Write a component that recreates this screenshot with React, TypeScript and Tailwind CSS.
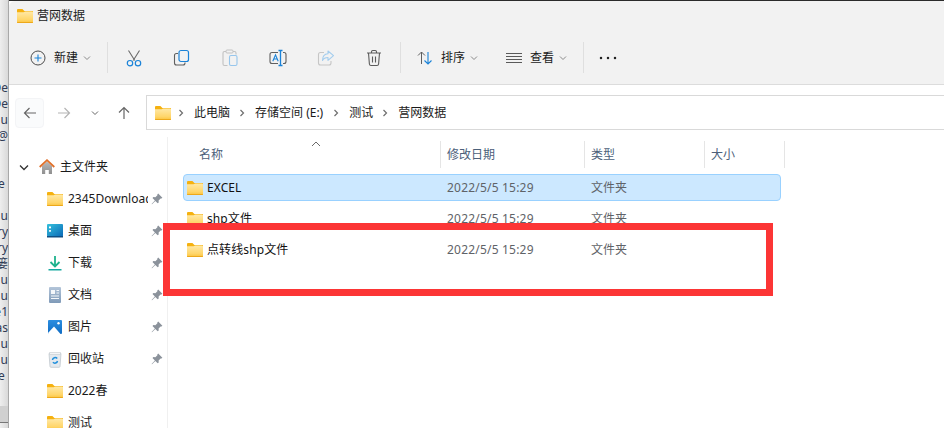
import React from "react";

const Folder = ({ id }: { id: string }) => (
  <svg width="16" height="14" viewBox="0 0 16 14" className="shrink-0">
    <defs>
      <linearGradient id={id} x1="0" y1="0" x2="0" y2="1">
        <stop offset="0" stopColor="#ffe9a8" />
        <stop offset="0.7" stopColor="#ffd66b" />
        <stop offset="1" stopColor="#fbc33c" />
      </linearGradient>
    </defs>
    <path d="M0 1.2C0 .5.5 0 1.2 0h4.2l2 2H16v3H0z" fill="#f5b110" />
    <path d="M0 3.2h6.6L8.2 2.4H15c.6 0 1 .4 1 1V13c0 .6-.4 1-1 1H1c-.6 0-1-.4-1-1z" fill={`url(#${id})`} />
    <path d="M0 13h16c0 .6-.4 1-1 1H1c-.6 0-1-.4-1-1z" fill="#eda81a" />
  </svg>
);

const Chevron = ({ className = "", color = "#8a8a8a" }: { className?: string; color?: string }) => (
  <svg width="8" height="6" viewBox="0 0 8 6" className={className}>
    <path d="M1 1.5l3 3 3-3" fill="none" stroke={color} strokeWidth="1" />
  </svg>
);

const Crumb = () => (
  <svg width="6" height="8" viewBox="0 0 6 8" className="shrink-0">
    <path d="M1.5 1l3 3-3 3" fill="none" stroke="#6e6e6e" strokeWidth="1.2" />
  </svg>
);

const Pin = () => (
  <svg width="12" height="12" viewBox="0 0 12 12" className="shrink-0">
    <path d="M7.2.6l4.2 4.2-1 .8-.8-.2-2 2 .1 2-1 .9-2.4-2.4L1 11.2l-.4-.3 3.3-3.4L1.500 5.100l.9-1 2 .1 2-2-.1-.8z" fill="#8b929b" />
  </svg>
);

const ToolBtn = ({ children }: { children: React.ReactNode }) => (
  <div className="w-12 h-5 flex items-center justify-center">{children}</div>
);

const Cut = () => (
  <svg width="20" height="20" viewBox="0 0 20 20">
    <path d="M4.500 2.500l6.300 10M15.500 2.500l-6.300 10" stroke="#6b6b6b" strokeWidth="1.1" fill="none" />
    <circle cx="6" cy="15.200" r="2.700" fill="none" stroke="#1b83d8" strokeWidth="1.200" />
    <circle cx="14" cy="15.200" r="2.700" fill="none" stroke="#1b83d8" strokeWidth="1.200" />
  </svg>
);
const Copy = () => (
  <svg width="20" height="20" viewBox="0 0 20 20">
    <path d="M6 5.500H4.500a2 2 0 0 0-2 2V15a2 2 0 0 0 2 2H11a2 2 0 0 0 2-2v-.5" fill="none" stroke="#5f5f5f" strokeWidth="1.100" />
    <rect x="7" y="2.500" width="9.500" height="11" rx="2" fill="none" stroke="#1b83d8" strokeWidth="1.200" />
  </svg>
);
const Paste = () => (
  <svg width="20" height="20" viewBox="0 0 20 20">
    <path d="M6 3.500H4.500a1.500 1.500 0 0 0-1.500 1.500v11a1.500 1.500 0 0 0 1.500 1.500h3M13 3.500h1.500A1.500 1.500 0 0 1 16 5v1.500" fill="none" stroke="#c2c2c2" strokeWidth="1.100" />
    <rect x="6" y="2" width="7" height="3" rx="1" fill="none" stroke="#c2c2c2" strokeWidth="1" />
    <rect x="9.500" y="7.500" width="7.500" height="10" rx="1.500" fill="none" stroke="#97c6ec" strokeWidth="1.100" />
  </svg>
);
const Rename = () => (
  <svg width="20" height="20" viewBox="0 0 20 20">
    <path d="M10 4.500H4a2 2 0 0 0-2 2v7a2 2 0 0 0 2 2h6M15 4.500h1a2 2 0 0 1 2 2v7a2 2 0 0 1-2 2h-1" fill="none" stroke="#5f5f5f" strokeWidth="1.100" />
    <path d="M4.800 13.200L7.500 6.800l2.700 6.400M5.800 11h3.400" fill="none" stroke="#1b83d8" strokeWidth="1.100" />
    <path d="M10.500 2.500h4M10.500 17.500h4M12.500 2.500v15" fill="none" stroke="#1b83d8" strokeWidth="1.300" />
  </svg>
);
const Share = () => (
  <svg width="20" height="20" viewBox="0 0 20 20">
    <path d="M8 4.500H4.500a2 2 0 0 0-2 2V15a2 2 0 0 0 2 2H13a2 2 0 0 0 2-2v-2" fill="none" stroke="#c6c6c6" strokeWidth="1.100" />
    <path d="M12 3l5.500 4.700L12 12.300V9.500c-2.500 0-4.500 1-5.500 3 0-4 2-6.500 5.500-6.700z" fill="none" stroke="#a3cdee" strokeWidth="1.100" strokeLinejoin="round" />
  </svg>
);
const Trash = () => (
  <svg width="20" height="20" viewBox="0 0 20 20">
    <path d="M3 5h14M7.500 5V3.800c0-.8.6-1.300 1.300-1.300h2.400c.7 0 1.300.5 1.300 1.300V5M4.500 5l.9 11c.1.900.7 1.500 1.600 1.500h6c.9 0 1.500-.6 1.600-1.500l.9-11M8.500 8.500v6M11.500 8.500v6" fill="none" stroke="#5c5c5c" strokeWidth="1.100" />
  </svg>
);

const Doc = () => (
  <svg width="16" height="18" viewBox="0 0 16 18">
    <defs>
      <linearGradient id="docg" x1="0" y1="0" x2="0" y2="1">
        <stop offset="0" stopColor="#b3c5d9" />
        <stop offset="1" stopColor="#7f9ab8" />
      </linearGradient>
    </defs>
    <rect x="2" y="1" width="12" height="16" rx="1" fill="url(#docg)" />
    <path d="M4 4h4v4H4zM9.500 4H12v1H9.500zM9.500 6.500H12v1H9.500zM4 9.500h8v1H4zM4 12h8v1H4z" fill="#f4f7fa" />
  </svg>
);
const Pic = () => (
  <svg width="16" height="16" viewBox="0 0 16 16">
    <defs>
      <linearGradient id="picg" x1="0" y1="0" x2="0" y2="1">
        <stop offset="0" stopColor="#2c8ee0" />
        <stop offset="1" stopColor="#0f6cc4" />
      </linearGradient>
    </defs>
    <rect x="1" y="1" width="14" height="14" rx="1" fill="url(#picg)" />
    <circle cx="11.500" cy="4.300" r="1.200" fill="#fff" />
    <path d="M1 14l6-6.500L13.500 15H2c-.5 0-1-.4-1-1z" fill="#fff" />
  </svg>
);
const Desktop = () => (
  <svg width="16" height="14" viewBox="0 0 16 14">
    <defs>
      <linearGradient id="deskg" x1="0" y1="0" x2="1" y2="1">
        <stop offset="0" stopColor="#35c1dc" />
        <stop offset="1" stopColor="#0a69b8" />
      </linearGradient>
    </defs>
    <rect x="0" y="0" width="16" height="12.500" rx="1" fill="url(#deskg)" />
    <rect x="0" y="12" width="16" height="1.500" fill="#0e4f84" />
    <rect x="2" y="2.500" width="2" height="1.800" fill="#fff" />
    <rect x="2" y="6" width="2" height="1.800" fill="#e5f4fb" />
  </svg>
);
const Download = () => (
  <svg width="16" height="16" viewBox="0 0 16 16">
    <path d="M8 1v10M3.500 7L8 11.500 12.500 7" fill="none" stroke="#1fb28d" strokeWidth="1.800" />
    <rect x="1.500" y="14" width="13" height="1.500" fill="#17a9a0" />
  </svg>
);
const Recycle = () => (
  <svg width="16" height="18" viewBox="0 0 16 18">
    <path d="M2 3.500h12l-1 13c0 .4-.4.800-.8.800H3.800c-.4 0-.8-.4-.8-.8z" fill="#e4e9ee" stroke="#bfc6cd" strokeWidth=".8" />
    <path d="M2.500 2.500h11v2h-11z" fill="#f3f5f7" stroke="#c4cacf" strokeWidth=".6" />
    <path d="M5.500 10a2.700 2.700 0 0 1 4.700-1.500M10.500 11a2.700 2.700 0 0 1-4.600 1.300" fill="none" stroke="#1f8fdc" strokeWidth="1.500" />
  </svg>
);
const Home = () => (
  <svg width="16" height="16" viewBox="0 0 16 16">
    <defs>
      <linearGradient id="homeg" x1="0" y1="0" x2="0" y2="1">
        <stop offset="0" stopColor="#b9b9b9" />
        <stop offset="1" stopColor="#8f8f8f" />
      </linearGradient>
    </defs>
    <path d="M3 7l5-4.500L13 7v8H9.800v-4H6.200v4H3z" fill="url(#homeg)" />
    <path d="M.7 8L8 1.200 15.300 8" fill="none" stroke="#e0702a" strokeWidth="1.800" />
  </svg>
);

const stripRows = ["De", "De", "u", "@", "", "", "e", "", "u", "ry", "ry", "篓", "u", "u", "e1", "as", "u", "u", "e"];

const navItems: { label: string; icon: React.ReactNode; pin: boolean }[] = [
  { label: "2345Downloads", icon: <Folder id="f-a" />, pin: true },
  { label: "桌面", icon: <Desktop />, pin: true },
  { label: "下载", icon: <Download />, pin: true },
  { label: "文档", icon: <Doc />, pin: true },
  { label: "图片", icon: <Pic />, pin: true },
  { label: "回收站", icon: <Recycle />, pin: true },
  { label: "2022春", icon: <Folder id="f-b" />, pin: false },
  { label: "测试", icon: <Folder id="f-c" />, pin: false },
];

const rows = [
  { name: "EXCEL", selected: true, id: "r-a" },
  { name: "shp文件", selected: false, id: "r-b" },
  { name: "点转线shp文件", selected: false, id: "r-c" },
];

export default function App() {
  return (
    <div className="relative flex w-[944px] h-[428px] overflow-hidden bg-white text-xs text-[#1a1a1a] font-['Noto_Sans','Noto_Sans_CJK_SC',sans-serif]">
      <div className="w-[9px] shrink-0 h-full flex flex-col bg-gradient-to-r from-[#eeeeee] to-[#d9d9d9] border-r border-[#a8a8a8] overflow-hidden">
        <div className="h-[406px] pt-20 shrink-0">
          {stripRows.map((t, i) => (
            <div
              key={i}
              className={
                t === "e"
                  ? "h-4 flex items-center justify-start -ml-[2px] whitespace-nowrap leading-4 text-[#2f3b55] text-xs"
                  : "h-4 flex items-center justify-end whitespace-nowrap leading-4 text-[#2f3b55] text-xs"
              }
            >
              {t}
            </div>
          ))}
        </div>
        <div className="h-[17px] bg-[#d0d0d0] border-b border-[#777777] shrink-0" />
      </div>

      <div className="flex-1 min-w-0 flex flex-col">
        <div className="h-px bg-[#2b2b2b] shrink-0" />
        <div className="h-[32px] shrink-0 bg-[#f2f2f2] rounded-tl-md flex items-center pl-2 pb-[2px] gap-1">
          <Folder id="f-title" />
          <span className="text-[#222222]">营网数据</span>
        </div>

        <div className="h-[52px] shrink-0 bg-[#f2f2f2] border-b border-[#dcdcdc] flex items-center pb-px text-[#1a1a1a]">
          <div className="w-[98px] flex items-center pl-[21px] shrink-0">
            <svg width="16" height="16" viewBox="0 0 16 16" className="shrink-0">
              <circle cx="8" cy="8" r="7" fill="none" stroke="#4d4d4d" strokeWidth="1" />
              <path d="M8 4.500v7M4.500 8h7" stroke="#1b83d8" strokeWidth="1.100" />
            </svg>
            <span className="ml-2">新建</span>
            <Chevron className="ml-[5px]" />
          </div>
          <div className="w-px h-[31px] self-start mt-[9px] bg-[#dfdfdf] shrink-0" />
          <div className="flex items-center pl-[2px] shrink-0">
            <ToolBtn><Cut /></ToolBtn>
            <ToolBtn><Copy /></ToolBtn>
            <ToolBtn><Paste /></ToolBtn>
            <ToolBtn><Rename /></ToolBtn>
            <ToolBtn><Share /></ToolBtn>
            <ToolBtn><Trash /></ToolBtn>
          </div>
          <div className="ml-[2px] w-px h-[31px] self-start mt-[9px] bg-[#dfdfdf] shrink-0" />
          <div className="flex items-center pl-4 shrink-0 w-[182px]">
            <svg width="16" height="14" viewBox="0 0 16 14" className="shrink-0">
              <path d="M4.500 13V1M1 4.500L4.500 1 8 4.500" fill="none" stroke="#5f5f5f" strokeWidth="1" />
              <path d="M11 1v12M7.500 9.500L11 13l3.500-3.500" fill="none" stroke="#1b83d8" strokeWidth="1.100" />
            </svg>
            <span className="ml-2">排序</span>
            <Chevron className="ml-[5px]" />
            <svg width="16" height="10" viewBox="0 0 16 10" className="ml-[28px] shrink-0">
              <path d="M0 .5h16M0 3.500h16M0 6.500h16M0 9.500h16" stroke="#5a5a5a" strokeWidth="1" />
            </svg>
            <span className="ml-2">查看</span>
            <Chevron className="ml-[5px]" />
          </div>
          <div className="w-px h-[31px] self-start mt-[9px] bg-[#dfdfdf] shrink-0" />
          <div className="pl-4 flex items-center gap-[5px] shrink-0">
            <span className="w-[2px] h-[2px] bg-[#222222] rounded-full scale-125" />
            <span className="w-[2px] h-[2px] bg-[#222222] rounded-full scale-125" />
            <span className="w-[2px] h-[2px] bg-[#222222] rounded-full scale-125" />
          </div>
        </div>

        <div className="h-[52px] shrink-0 flex items-start pt-[10px]">
          <div className="w-[137px] h-[35px] shrink-0 flex items-center pl-[6px]">
            <div className="w-[29px] h-[30px] rounded bg-[#fafbfc] border border-[#f3f4f6] flex items-center justify-center">
              <svg width="14" height="12" viewBox="0 0 14 12">
                <path d="M13 6H1.500M6.500 1l-5 5 5 5" fill="none" stroke="#666666" strokeWidth="1.200" />
              </svg>
            </div>
            <svg width="14" height="12" viewBox="0 0 14 12" className="ml-[13px]">
              <path d="M1 6h11.500M7.500 1l5 5-5 5" fill="none" stroke="#b4b4b4" strokeWidth="1.200" />
            </svg>
            <Chevron className="ml-5" color="#666666" />
            <svg width="12" height="14" viewBox="0 0 12 14" className="ml-[19px]">
              <path d="M6 13V1.500M1 6.500l5-5 5 5" fill="none" stroke="#666666" strokeWidth="1.200" />
            </svg>
          </div>
          <div className="flex-1 h-[35px] border border-r-0 border-[#d9d9d9] flex items-center pl-2">
            <Folder id="f-addr" />
            <span className="ml-[7px]"><Crumb /></span>
            <span className="ml-[10px]">此电脑</span>
            <span className="ml-[9px]"><Crumb /></span>
            <span className="ml-[10px]">存储空间 (E:)</span>
            <span className="ml-[10px]"><Crumb /></span>
            <span className="ml-[10px]">测试</span>
            <span className="ml-[9px]"><Crumb /></span>
            <span className="ml-[10px]">营网数据</span>
          </div>
        </div>

        <div className="flex-1 min-h-0 flex">
          <div className="w-[159px] shrink-0 border-r border-[#f0f0f0] pt-[14px] overflow-hidden text-[#1a1a1a]">
            <div className="h-8 flex items-center pl-[10px]">
              <svg width="10" height="7" viewBox="0 0 10 7" className="shrink-0">
                <path d="M1 1.500l4 4 4-4" fill="none" stroke="#333333" strokeWidth="1.300" />
              </svg>
              <span className="ml-[10px]"><Home /></span>
              <span className="ml-[5px]">主文件夹</span>
            </div>
            {navItems.map((n) => (
              <div key={n.label} className="h-8 flex items-center pl-[38px]">
                <div className="w-4 flex justify-center shrink-0">{n.icon}</div>
                <span className="ml-[5px] w-[80px] overflow-hidden whitespace-nowrap shrink-0">{n.label}</span>
                {n.pin && <span className="ml-[3px] flex"><Pin /></span>}
              </div>
            ))}
          </div>

          <div className="flex-1 min-w-0 pl-[15px] pt-[4px]">
            <div className="relative flex h-[27px] text-[#4c607a]">
              <div className="w-[258px] pl-4 border-r border-[#e5e5e5] flex items-center">名称</div>
              <div className="w-[144px] pl-[6px] border-r border-[#e5e5e5] flex items-center">修改日期</div>
              <div className="w-[120px] pl-[6px] border-r border-[#e5e5e5] flex items-center">类型</div>
              <div className="w-[80px] pl-[6px] border-r border-[#e5e5e5] flex items-center">大小</div>
              <svg width="10" height="6" viewBox="0 0 10 6" className="absolute left-[128px] top-0">
                <path d="M1 5l4-4 4 4" fill="none" stroke="#6a6a6a" strokeWidth="1" />
              </svg>
            </div>
            <div className="mt-[6px] w-[598px] flex flex-col gap-1">
              {rows.map((r) => (
                <div
                  key={r.id}
                  className={
                    r.selected
                      ? "flex items-center h-[27px] rounded-sm bg-[#cce8ff] border border-[#99d1ff]"
                      : "flex items-center h-[27px] border border-transparent"
                  }
                >
                  <div className="w-[257px] pl-[3px] flex items-center shrink-0">
                    <Folder id={r.id} />
                    <span className="ml-1 text-[#111111] tracking-[0.1px]">{r.name}</span>
                  </div>
                  <div className="w-[144px] pl-[6px] text-[#5f6368] tracking-[0.2px] shrink-0">2022/5/5 15:29</div>
                  <div className="pl-[6px] text-[#5f6368]">文件夹</div>
                </div>
              ))}
            </div>
          </div>
        </div>
      </div>

      <div className="absolute left-[163px] top-[223px] w-[610px] h-[73px] border-[7px] border-[#fc3535]" />
    </div>
  );
}
